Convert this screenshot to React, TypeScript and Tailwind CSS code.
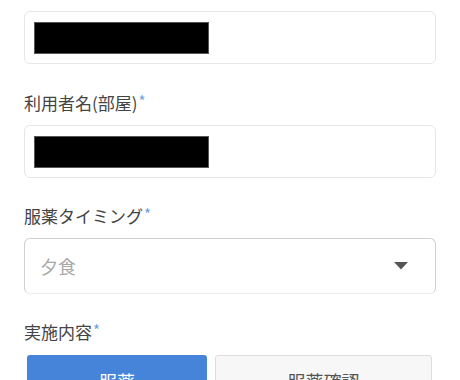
import React from "react";

const font = { fontFamily: '"Noto Sans CJK JP", "Noto Sans", sans-serif' };

function Label({ text }: { text: string }) {
  return (
    <div className="flex items-start h-6 text-[17px] leading-6 text-[#444]">
      <span>{text}</span>
      <span className="text-[#6ea3d8] text-[15px] leading-5 ml-[1px]">*</span>
    </div>
  );
}

function Redacted() {
  return (
    <div className="h-[53px] rounded-md border border-[#e6e6e6] bg-white flex items-center pl-[9px]">
      <div className="w-[175px] h-[32px] bg-black border border-[#555]" />
    </div>
  );
}

export default function App() {
  return (
    <div className="w-[460px] h-[380px] overflow-hidden bg-white" style={font}>
      <div className="px-6 pt-[11px] flex flex-col">
        <Redacted />
        <div className="mt-[27px]">
          <Label text="利用者名(部屋)" />
        </div>
        <div className="mt-[10px]">
          <Redacted />
        </div>
        <div className="mt-[26px]">
          <Label text="服薬タイミング" />
        </div>
        <div className="mt-[10px] h-[56px] rounded-md border border-[#d0d0d0] border-b-[#ececec] bg-white flex items-center justify-between pl-[15px] pr-[27px]">
          <span className="text-[18px] text-[#a8a8a8]">夕食</span>
          <svg width="14" height="8" viewBox="0 0 14 8">
            <path d="M0 0 H14 L7 7.5 Z" fill="#555" />
          </svg>
        </div>
        <div className="mt-[26px]">
          <Label text="実施内容" />
        </div>
        <div className="mt-[11px] flex gap-2 pl-[3px]">
          <button className="w-[180px] h-[52px] rounded-[3px] bg-[#4684da] text-white text-[18px] flex items-center justify-center">
            服薬
          </button>
          <button className="w-[217px] h-[52px] rounded-[3px] bg-[#f7f7f7] border border-[#dedede] text-[#555] text-[18px] flex items-center justify-center">
            服薬確認
          </button>
        </div>
      </div>
    </div>
  );
}
